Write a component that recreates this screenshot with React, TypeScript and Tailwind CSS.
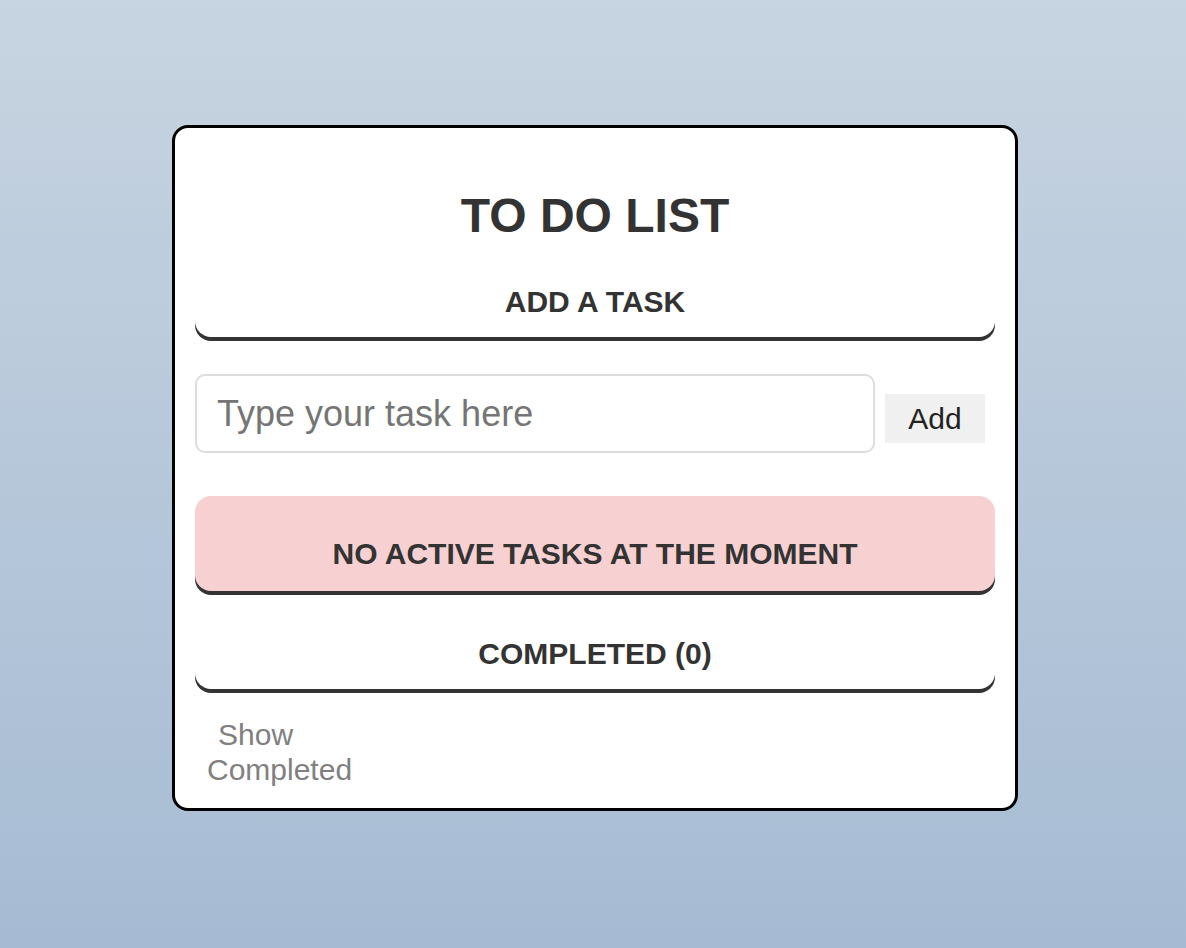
import React from "react";

export default function App() {
  return (
    <div
      className="min-h-[948px] w-full bg-[linear-gradient(to_bottom,#c7d4e1,#a6bbd3)] flex justify-center pt-[125px] pl-[4px]"
      style={{ fontFamily: '"Liberation Sans", Arial, Helvetica, sans-serif' }}
    >
      <div className="w-[846px] h-[686px] border-[3px] border-black rounded-[16px] bg-white px-[20px] flex flex-col">
        <h1 className="mt-[60px] text-center text-[48px] leading-[56px] font-bold text-[#333]">
          TO DO LIST
        </h1>
        <div className="mt-[23px] rounded-[16px] shadow-[0_4px_0_#333] pt-[18px] pb-[18px] text-center text-[30px] leading-[34px] font-bold text-[#333]">
          ADD A TASK
        </div>
        <div className="mt-[37px] flex items-start">
          <input
            type="text"
            placeholder="Type your task here"
            className="w-[680px] h-[79px] border-2 border-[#dddddd] rounded-[10px] pl-[20px] text-[36px] text-[#333] placeholder:text-[#757575] outline-none"
          />
          <button className="ml-[10px] mt-[20px] w-[100px] h-[49px] bg-[#f0f0f0] text-[30px] text-[#222] leading-none">
            Add
          </button>
        </div>
        <div className="mt-[43px] h-[95px] rounded-[16px] bg-[#f7d1d1] shadow-[0_4px_0_#333] pt-[41px] text-center text-[30px] leading-[34px] font-bold text-[#333]">
          NO ACTIVE TASKS AT THE MOMENT
        </div>
        <div className="mt-[28px] rounded-[16px] shadow-[0_4px_0_#333] pt-[18px] pb-[18px] text-center text-[30px] leading-[34px] font-bold text-[#333]">
          COMPLETED (0)
        </div>
        <div className="mt-[28px] pl-[12px] text-[30px] leading-[35px] text-[#808080]">
          <div className="pl-[11px]">Show</div>
          <div>Completed</div>
        </div>
      </div>
    </div>
  );
}
